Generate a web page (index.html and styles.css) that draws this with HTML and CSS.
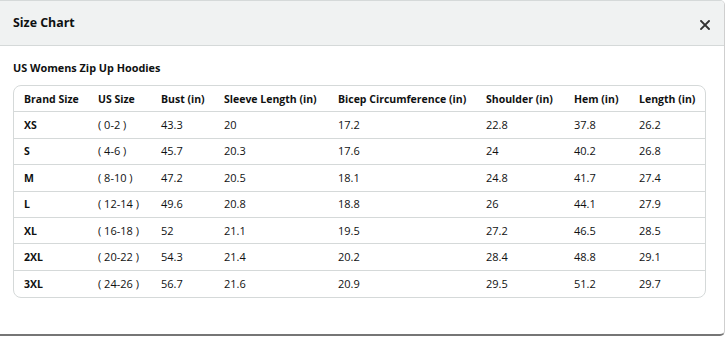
FILE: index.html
```html
<!DOCTYPE html>
<html>
<head>
<meta charset="utf-8">
<link rel="stylesheet" href="styles.css">
</head>
<body>
<div class="modal">
  <header class="modal-header">
    <h1 class="title">Size Chart</h1>
    <button class="close" aria-label="Close">
      <svg width="10" height="10" viewBox="0 0 10 10"><path d="M1 1L9 9M9 1L1 9" stroke="#333" stroke-width="1.9" stroke-linecap="square"/></svg>
    </button>
  </header>
  <div class="modal-body">
    <h2 class="subtitle">US Womens Zip Up Hoodies</h2>
    <table class="chart">
      <colgroup>
        <col class="c1"><col class="c2"><col class="c3"><col class="c4"><col class="c5"><col class="c6"><col class="c7"><col class="c8">
      </colgroup>
      <thead>
        <tr><th>Brand Size</th><th>US Size</th><th>Bust (in)</th><th>Sleeve Length (in)</th><th>Bicep Circumference (in)</th><th>Shoulder (in)</th><th>Hem (in)</th><th>Length (in)</th></tr>
      </thead>
      <tbody>
        <tr><th>XS</th><td>( 0-2 )</td><td>43.3</td><td>20</td><td>17.2</td><td>22.8</td><td>37.8</td><td>26.2</td></tr>
        <tr><th>S</th><td>( 4-6 )</td><td>45.7</td><td>20.3</td><td>17.6</td><td>24</td><td>40.2</td><td>26.8</td></tr>
        <tr><th>M</th><td>( 8-10 )</td><td>47.2</td><td>20.5</td><td>18.1</td><td>24.8</td><td>41.7</td><td>27.4</td></tr>
        <tr><th>L</th><td>( 12-14 )</td><td>49.6</td><td>20.8</td><td>18.8</td><td>26</td><td>44.1</td><td>27.9</td></tr>
        <tr><th>XL</th><td>( 16-18 )</td><td>52</td><td>21.1</td><td>19.5</td><td>27.2</td><td>46.5</td><td>28.5</td></tr>
        <tr><th>2XL</th><td>( 20-22 )</td><td>54.3</td><td>21.4</td><td>20.2</td><td>28.4</td><td>48.8</td><td>29.1</td></tr>
        <tr><th>3XL</th><td>( 24-26 )</td><td>56.7</td><td>21.6</td><td>20.9</td><td>29.5</td><td>51.2</td><td>29.7</td></tr>
      </tbody>
    </table>
  </div>
</div>
</body>
</html>
```

FILE: styles.css
```css
html, body {
  margin: 0;
  padding: 0;
  background: #ffffff;
}
body {
  font-family: "Open Sans", "Liberation Sans", Arial, sans-serif;
  color: #0f1111;
}
.modal {
  box-sizing: border-box;
  width: 725px;
  height: 336px;
  border-top: 1px solid #d5d9d9;
  border-right: 1px solid #cfcfcf;
  border-bottom: 2px solid #767676;
  border-radius: 0 5px 5px 0;
  overflow: hidden;
  background: #fff;
}
.modal-header {
  box-sizing: border-box;
  height: 45px;
  background: #f0f2f2;
  border-bottom: 1px solid #d5d9d9;
  display: flex;
  align-items: center;
  justify-content: space-between;
  padding: 0 14px 0 13px;
}
.title {
  margin: 0;
  font-size: 12.4px;
  font-weight: 700;
  line-height: 18px;
}
.close {
  border: 0;
  background: transparent;
  padding: 0;
  width: 10px;
  height: 10px;
  display: flex;
  margin-top: 3px;
}
.modal-body {
  padding: 14px 0 0 13px;
}
.subtitle {
  margin: 0 0 9px 0;
  font-size: 10.85px;
  font-weight: 700;
  line-height: 16px;
}
.chart {
  table-layout: fixed;
  width: 693px;
  border-collapse: separate;
  border-spacing: 0;
  border: 1px solid #d5d9d9;
  border-radius: 8px;
  font-size: 11px;
}
.c1 { width: 74px; }
.c2 { width: 63px; }
.c3 { width: 63px; }
.c4 { width: 114px; }
.c5 { width: 148px; }
.c6 { width: 88px; }
.c7 { width: 65px; }
.c8 { width: 76px; }
.chart th, .chart td {
  box-sizing: border-box;
  height: 26.4px;
  padding: 0 0 0 10px;
  text-align: left;
  vertical-align: middle;
  border-bottom: 1px solid #d5d9d9;
  white-space: nowrap;
  line-height: 16px;
}
.chart th {
  font-weight: 700;
  font-size: 10.5px;
}
.chart td {
  font-weight: 400;
}
.chart tbody tr:last-child th,
.chart tbody tr:last-child td {
  border-bottom: 0;
}
```
